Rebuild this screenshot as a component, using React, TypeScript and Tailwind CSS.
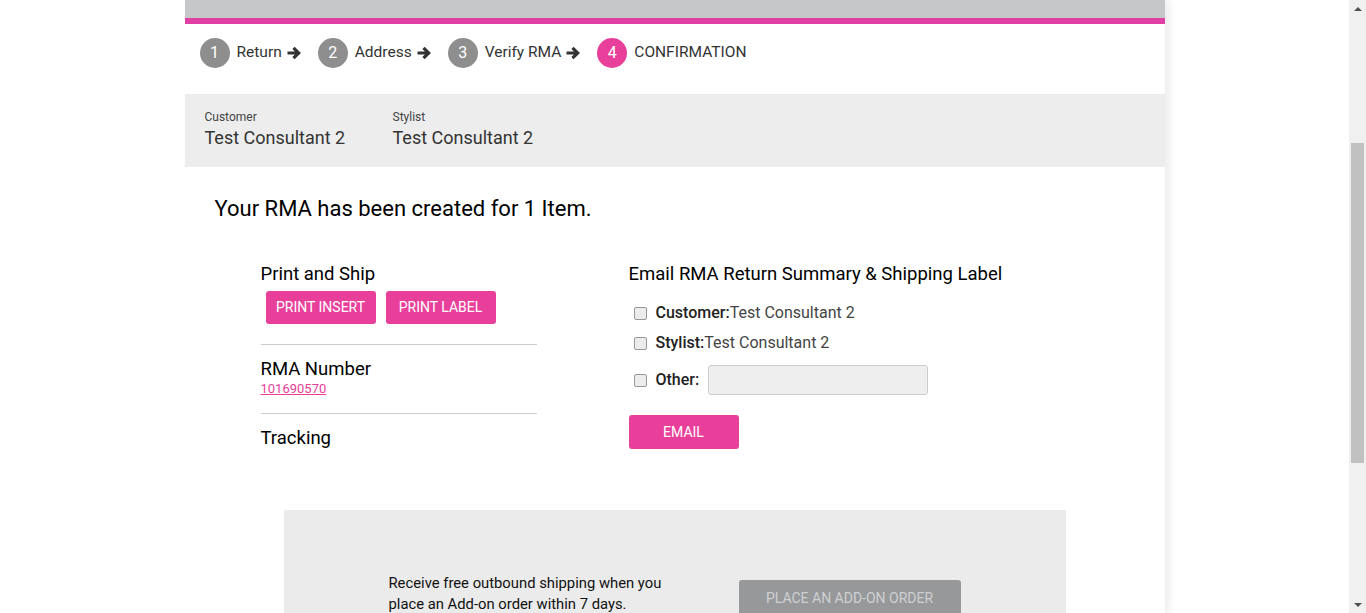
import React from "react";

const font = { fontFamily: "Roboto, 'Liberation Sans', sans-serif" };

function Step({ n, label, active, arrow }: { n: number; label: string; active?: boolean; arrow?: boolean }) {
  return (
    <div className="flex items-center">
      <div
        className={`w-[30px] h-[30px] rounded-full flex items-center justify-center text-white text-[16px] ${
          active ? "bg-[#e8409a]" : "bg-[#8e8e8e]"
        }`}
      >
        {n}
      </div>
      <span className="ml-[7px] text-[15.5px] text-[#333]">{label}</span>
      {arrow && (
        <svg className="ml-[5px]" width="14" height="14" viewBox="0 0 14 14">
          <path d="M0.5 7 H11.5 M6.5 1.8 L11.7 7 L6.5 12.2" stroke="#333" strokeWidth="3.2" fill="none" strokeLinejoin="miter" />
        </svg>
      )}
    </div>
  );
}

function Check({ label, value }: { label: string; value?: string }) {
  return (
    <div className="flex items-center">
      <div className="w-[13px] h-[13px] rounded-[2px] border border-[#999] bg-[#ececec] ml-[5px]" />
      <span className="ml-[9px] text-[16px] text-[#222] font-medium">{label}</span>
      {value && <span className="text-[16px] text-[#444]">{value}</span>}
    </div>
  );
}

export default function App() {
  return (
    <div className="flex h-[613px] overflow-hidden bg-white" style={font}>
      <div className="flex-1 flex justify-center">
        <div className="w-[980px] shadow-[4px_0_8px_rgba(0,0,0,0.08)] flex flex-col">
          <div className="shrink-0 h-[18px] bg-[#c6c7c9]" />
          <div className="shrink-0 h-[6px] bg-[#e040a3]" />
          <div className="shrink-0 h-[70px] pl-[15px] pt-[14px] flex items-start gap-[17px]">
            <Step n={1} label="Return" arrow />
            <Step n={2} label="Address" arrow />
            <Step n={3} label="Verify RMA" arrow />
            <Step n={4} label="CONFIRMATION" active />
          </div>
          <div className="shrink-0 h-[73px] bg-[#ededed] pl-[20px] pt-[15px] flex">
            <div className="w-[188px]">
              <div className="text-[12px] text-[#444] leading-[16px]">Customer</div>
              <div className="text-[18px] text-[#333] leading-[24px] mt-[1px]">Test Consultant 2</div>
            </div>
            <div>
              <div className="text-[12px] text-[#444] leading-[16px]">Stylist</div>
              <div className="text-[18px] text-[#333] leading-[24px] mt-[1px]">Test Consultant 2</div>
            </div>
          </div>
          <div className="shrink-0 pl-[30px] mt-[28px]">
            <h1 className="text-[22px] leading-[28px] text-black">Your RMA has been created for 1 Item.</h1>
          </div>
          <div className="shrink-0 flex mt-[39px] pl-[76px]">
            <div className="w-[276px]">
              <div className="text-[18.5px] leading-[24px] text-black">Print and Ship</div>
              <div className="flex gap-[10px] ml-[5px] mt-[5px]">
                <button className="w-[110px] h-[33px] rounded-[3px] bg-[#e8409a] text-white text-[14px]">PRINT INSERT</button>
                <button className="w-[110px] h-[33px] rounded-[3px] bg-[#e8409a] text-white text-[14px]">PRINT LABEL</button>
              </div>
              <div className="h-px bg-[#cccccc] mt-[20px]" />
              <div className="text-[18.5px] leading-[24px] text-black mt-[12px]">RMA Number</div>
              <a className="block text-[13px] leading-[16px] text-[#e8409a] underline">101690570</a>
              <div className="h-px bg-[#cccccc] mt-[16px]" />
              <div className="text-[18.5px] leading-[24px] text-black mt-[12px]">Tracking</div>
            </div>
            <div className="ml-[92px]">
              <div className="text-[18.5px] leading-[24px] text-black">Email RMA Return Summary &amp; Shipping Label</div>
              <div className="mt-[12px] flex flex-col">
                <div className="h-[30px] flex items-center">
                  <Check label="Customer:" value="Test Consultant 2" />
                </div>
                <div className="h-[30px] flex items-center">
                  <Check label="Stylist:" value="Test Consultant 2" />
                </div>
                <div className="h-[30px] flex items-center mt-[7px]">
                  <Check label="Other:" />
                  <div className="ml-[9px] w-[220px] h-[30px] rounded-[3px] bg-[#eeeeee] border border-[#cccccc]" />
                </div>
              </div>
              <button className="mt-[20px] w-[110px] h-[34px] rounded-[3px] bg-[#e8409a] text-white text-[14px]">EMAIL</button>
            </div>
          </div>
          <div className="shrink-0 mx-auto w-[782px] h-[200px] bg-[#ebebeb] mt-[60px] pt-[63px] pl-[105px] flex">
            <div className="w-[350px] text-[14.8px] leading-[21px] text-[#111]">
              Receive free outbound shipping when you
              <br />
              place an Add-on order within 7 days.
            </div>
            <div className="pt-[7px]">
              <button className="w-[222px] h-[36px] rounded-[3px] bg-[#97989a] text-[#cfd0d2] text-[14px]">PLACE AN ADD-ON ORDER</button>
            </div>
          </div>
        </div>
      </div>
      <div className="w-[17px] bg-[#f0f0f0] flex flex-col items-center">
        <div className="h-[17px] flex items-center justify-center">
          <div className="w-0 h-0 border-l-[4px] border-r-[4px] border-b-[4px] border-l-transparent border-r-transparent border-b-[#505050]" />
        </div>
        <div className="mt-[126px] w-[13px] h-[320px] bg-[#c1c1c1]" />
        <div className="flex-1" />
        <div className="h-[17px] flex items-center justify-center">
          <div className="w-0 h-0 border-l-[4px] border-r-[4px] border-t-[4px] border-l-transparent border-r-transparent border-t-[#505050]" />
        </div>
      </div>
    </div>
  );
}
